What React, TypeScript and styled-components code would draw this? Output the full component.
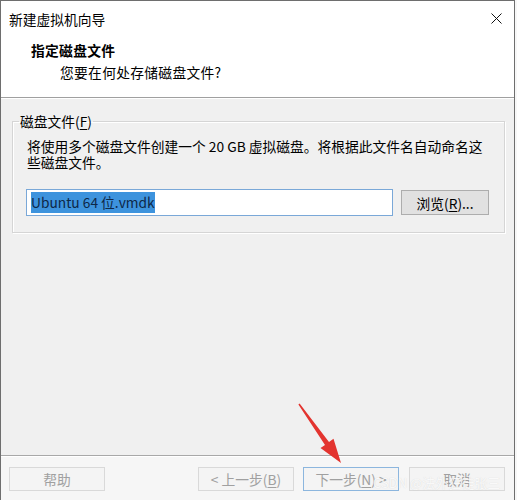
import React from 'react';
import styled, { createGlobalStyle } from 'styled-components';

const GlobalStyle = createGlobalStyle`
  html, body {
    margin: 0;
    padding: 0;
    background: #f7f7f7;
  }
  body {
    font-family: "Noto Sans CJK SC", "Liberation Sans", sans-serif;
    font-size: 13.75px;
    color: #000;
  }
`;

const Window = styled.div`
  position: relative;
  box-sizing: border-box;
  width: 515px;
  height: 500px;
  border: 1px solid #6e6e6e;
  border-bottom: none;
  display: flex;
  flex-direction: column;
  background: #f0f0f0;
`;

const TitleBar = styled.div`
  height: 35px;
  display: flex;
  align-items: center;
  justify-content: space-between;
  padding: 0 12px 0 8px;
  background: #fff;
  line-height: 16px;
`;

const Header = styled.div`
  height: 62px;
  box-sizing: border-box;
  padding: 4px 0 0 30px;
  background: #fff;
  border-bottom: 1px solid #a0a0a0;
  box-shadow: 0 1px 0 #fff;
`;

const Heading = styled.div`
  font-weight: 700;
  line-height: 20px;
  letter-spacing: 0.3px;
`;

const SubHeading = styled.div`
  margin: 2px 0 0 29px;
  line-height: 20px;
  letter-spacing: 0.3px;
`;

const Body = styled.div`
  flex: 1;
  padding: 15px 9px 0 11px;
`;

const GroupBox = styled.fieldset`
  margin: 0;
  padding: 0 0 16px 14px;
  border: 1px solid #d5d5d5;
  box-shadow: inset 1px 1px 0 #fff, 1px 1px 0 #fff;
  min-width: 0;
`;

const GroupLabel = styled.legend`
  margin-left: -8px;
  padding: 0 1px;
  line-height: 16px;
`;

const Hint = styled.p`
  margin: 9px 0 0;
  line-height: 16px;
`;

const InputRow = styled.div`
  display: flex;
  align-items: center;
  gap: 8px;
  margin-top: 19px;
  margin-left: -1px;
`;

const TextBox = styled.div`
  box-sizing: border-box;
  width: 367px;
  height: 27px;
  padding: 2px 4px;
  display: flex;
  align-items: center;
  background: #fff;
  border: 1px solid #7aa8d8;
`;

const Selected = styled.span`
  background: #3d93dd;
  color: #0e2848;
  line-height: 21px;
`;

const Button = styled.button<{ $disabled?: boolean; $focused?: boolean }>`
  box-sizing: border-box;
  height: 24px;
  width: 96px;
  padding: 0;
  font-family: inherit;
  font-size: 13.75px;
  line-height: 16px;
  background: ${({ $disabled }) => ($disabled ? '#f4f4f4' : '#e1e1e1')};
  color: ${({ $disabled }) => ($disabled ? '#a0a0a0' : '#000')};
  border: 1px solid
    ${({ $disabled, $focused }) => ($focused ? '#8cb6de' : $disabled ? '#d9d9d9' : '#adadad')};
`;

const BrowseButton = styled(Button)`
  width: 88px;
  height: 25px;
`;

const Footer = styled.div`
  height: 45px;
  box-sizing: border-box;
  display: flex;
  align-items: flex-start;
  padding: 11px 9px 0 8px;
  background: #f6f6f6;
  border-top: 1px solid #a8a8a8;
  box-shadow: inset 0 1px 0 #fff;
`;

const Spacer = styled.div`
  flex: 1;
`;

const NavGroup = styled.div`
  display: flex;
  gap: 9px;
`;

const Mnemonic = styled.u`
  text-underline-offset: 2px;
`;

const Arrow = styled.svg`
  position: absolute;
  left: 289px;
  top: 397px;
  pointer-events: none;
`;

const Watermark = styled.span`
  position: absolute;
  left: 372px;
  top: 474px;
  font-size: 13px;
  line-height: 16px;
  color: rgba(255, 255, 255, 0.85);
  text-shadow: 0 0 1px rgba(160, 160, 160, 0.4);
  pointer-events: none;
  white-space: nowrap;
`;

const CloseIcon = () => (
  <svg width="11" height="11" viewBox="0 0 11 11">
    <path d="M0.5 0.5 L10.5 10.5 M10.5 0.5 L0.5 10.5" stroke="#111" strokeWidth="1" fill="none" />
  </svg>
);

export default function App() {
  return (
    <>
      <GlobalStyle />
      <Window>
        <TitleBar>
          <span>新建虚拟机向导</span>
          <CloseIcon />
        </TitleBar>
        <Header>
          <Heading>指定磁盘文件</Heading>
          <SubHeading>您要在何处存储磁盘文件?</SubHeading>
        </Header>

        <Body>
          <GroupBox>
            <GroupLabel>
              磁盘文件(<Mnemonic>F</Mnemonic>)
            </GroupLabel>
            <Hint>
              将使用多个磁盘文件创建一个 20 GB 虚拟磁盘。将根据此文件名自动命名这
              <br />
              些磁盘文件。
            </Hint>
            <InputRow>
              <TextBox>
                <Selected>Ubuntu 64 位.vmdk</Selected>
              </TextBox>
              <BrowseButton>
                浏览(<Mnemonic>R</Mnemonic>)...
              </BrowseButton>
            </InputRow>
          </GroupBox>
        </Body>

        <Footer>
          <Button $disabled>帮助</Button>
          <Spacer />
          <NavGroup>
            <Button $disabled>
              &lt; 上一步(<Mnemonic>B</Mnemonic>)
            </Button>
            <Button $disabled $focused>
              下一步(<Mnemonic>N</Mnemonic>) &gt;
            </Button>
            <Button $disabled style={{ marginLeft: 1 }}>
              取消
            </Button>
          </NavGroup>
        </Footer>

        <Arrow width="60" height="70" viewBox="0 0 60 70">
          <polygon
            points="8.4,6.4 35,46.9 30.5,50 51,65 43.5,40.8 39,44 9.6,5.6"
            fill="#e3342f"
          />
        </Arrow>
        <Watermark>CSDN @法外狂徒张三</Watermark>
      </Window>
    </>
  );
}
